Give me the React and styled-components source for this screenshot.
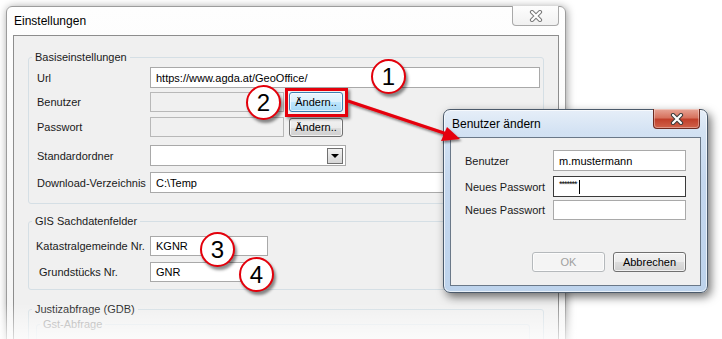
import styled, { createGlobalStyle } from "styled-components";

const GlobalStyle = createGlobalStyle`
  html, body {
    margin: 0;
    background: #fff;
  }
  body {
    font-family: "Liberation Sans", Arial, sans-serif;
    font-size: 11px;
    color: #000;
  }
`;

const Desktop = styled.div`
  position: relative;
  width: 722px;
  height: 339px;
  overflow: hidden;
  background: #fff;
`;

const WindowBase = styled.div`
  position: absolute;
  box-sizing: border-box;
  display: flex;
  flex-direction: column;
`;

const BasicWindow = styled(WindowBase)`
  left: 6px;
  top: 6px;
  width: 560px;
  height: 360px;
  border: 1px solid #9c9c9c;
  border-radius: 6px 6px 0 0;
  background: linear-gradient(#fefefe, #f4f4f4);
  box-shadow: 1px 1px 8px rgba(0, 0, 0, 0.4);
`;

const AeroWindow = styled(WindowBase)`
  left: 443px;
  top: 109px;
  width: 265px;
  height: 184px;
  border: 1px solid #4b5a6b;
  border-radius: 7px;
  background: linear-gradient(
    180deg,
    #e6eef8 0%,
    #d3e2f3 12%,
    #c4d7ee 40%,
    #bdd3ec 100%
  );
  box-shadow: inset 0 0 0 1px rgba(255, 255, 255, 0.65),
    3px 4px 10px rgba(0, 0, 0, 0.55);
`;

const TitleBar = styled.div`
  display: flex;
  align-items: flex-start;
  justify-content: space-between;
  height: ${(p) => p.$height}px;
  flex-shrink: 0;
`;

const Title = styled.span`
  align-self: center;
  padding-left: ${(p) => p.$indent}px;
  font-size: 12px;
  color: #000;
`;

const CloseButton = styled.div`
  display: flex;
  align-items: center;
  justify-content: center;
  width: 47px;
  height: 20px;
  margin-top: -1px;
  margin-right: ${(p) => p.$right}px;
  box-sizing: border-box;
  border-radius: 0 0 4px 4px;
  border: 1px solid ${(p) => (p.$danger ? "#6d2a20" : "#a9a9a9")};
  border-top: none;
  background: ${(p) =>
    p.$danger
      ? "linear-gradient(#e7a596 0%, #d7735f 45%, #c1402b 55%, #d0624a 100%)"
      : "linear-gradient(#fdfdfd, #f1f1f1)"};
  box-shadow: ${(p) =>
    p.$danger ? "inset 0 0 0 1px rgba(255,255,255,0.35)" : "none"};
`;

const Client = styled.div`
  flex: 1;
  margin: 0 ${(p) => p.$side}px ${(p) => p.$bottom}px;
  border: 1px solid ${(p) => p.$edge};
  background: #f0f0f0;
  padding: ${(p) => p.$pad};
  display: flex;
  flex-direction: column;
`;

const Group = styled.fieldset`
  margin: ${(p) => p.$top || 0}px 0 0;
  padding: ${(p) => p.$pad};
  border: 1px solid ${(p) => (p.$faint ? "#e2e8ec" : "#d5dfe5")};
  border-radius: 3px;
  min-width: 0;
`;

const Legend = styled.legend`
  margin-left: ${(p) => p.$shift}px;
  padding: 0 3px;
  font-size: 11px;
  line-height: 13px;
  color: ${(p) => (p.$disabled ? "#a3a3a3" : "#1a1a1a")};
`;

const Row = styled.div`
  display: flex;
  align-items: center;
  height: ${(p) => p.$h}px;
  margin-top: ${(p) => p.$mt || 0}px;
`;

const Label = styled.span`
  width: ${(p) => p.$w}px;
  flex-shrink: 0;
  white-space: nowrap;
  color: #1a1a1a;
`;

const TextBox = styled.div`
  box-sizing: border-box;
  height: 100%;
  width: ${(p) => (p.$w ? `${p.$w}px` : "auto")};
  flex: ${(p) => (p.$w ? "none" : "1")};
  border: 1px solid ${(p) =>
    p.$focus ? "#3a3a3a" : p.$disabled ? "#b8b8b8" : "#a9a9a9"};
  background: ${(p) => (p.$disabled ? "#f0f0f0" : "#fff")};
  padding-left: 5px;
  display: flex;
  align-items: center;
  white-space: nowrap;
  overflow: hidden;
  color: #000;
`;

const Mask = styled.span`
  font-size: 9px;
  letter-spacing: -1px;
  align-self: flex-start;
  margin-top: 2px;
`;

const Caret = styled.span`
  width: 1px;
  height: 14px;
  margin-left: 2px;
  background: #000;
`;

const ComboBox = styled(TextBox)`
  justify-content: flex-end;
  padding: 0 2px 0 5px;
`;

const DropButton = styled.div`
  width: 16px;
  height: 16px;
  box-sizing: border-box;
  border: 1px solid #707070;
  background: linear-gradient(#f2f2f2, #d6d6d6);
  display: flex;
  align-items: center;
  justify-content: center;
`;

const Triangle = styled.div`
  width: 0;
  height: 0;
  border-left: 4px solid transparent;
  border-right: 4px solid transparent;
  border-top: 4px solid #000;
`;

const Button = styled.div`
  box-sizing: border-box;
  width: ${(p) => p.$w}px;
  height: ${(p) => p.$h || 20}px;
  margin-left: ${(p) => p.$ml || 0}px;
  border-radius: 3px;
  display: flex;
  align-items: center;
  justify-content: center;
  font-size: 11px;
  border: 1px solid
    ${(p) => (p.$disabled ? "#b5b9bc" : p.$hot ? "#3c7fb1" : "#707070")};
  color: ${(p) => (p.$disabled ? "#a0a0a0" : "#000")};
  background: ${(p) =>
    p.$disabled
      ? "#f4f4f4"
      : p.$hot
      ? "linear-gradient(#eaf6fd 0%, #d9f0fc 50%, #bee6fd 51%, #a7d9f5 100%)"
      : "linear-gradient(#f2f2f2 0%, #ebebeb 50%, #dddddd 51%, #cfcfcf 100%)"};
  box-shadow: inset 0 0 0 1px rgba(255, 255, 255, 0.7);
`;

const ButtonRow = styled.div`
  display: flex;
  justify-content: flex-end;
  margin-top: ${(p) => p.$mt}px;
`;

const Highlight = styled.div`
  position: absolute;
  left: 285px;
  top: 88px;
  width: 63px;
  height: 29px;
  box-sizing: border-box;
  border: 3px solid #e5000b;
  box-shadow: 2px 2px 3px rgba(0, 0, 0, 0.45);
`;

const Callout = styled.div`
  position: absolute;
  left: ${(p) => p.$x}px;
  top: ${(p) => p.$y}px;
  width: 35px;
  height: 35px;
  box-sizing: border-box;
  border-radius: 50%;
  border: 2.5px solid #e3000b;
  background: #fff;
  box-shadow: 2px 3px 3px rgba(0, 0, 0, 0.45);
  display: flex;
  align-items: center;
  justify-content: center;
  font-family: "Liberation Sans", Arial, sans-serif;
  font-size: 24px;
  color: #000;
`;

const Overlay = styled.svg`
  position: absolute;
  left: 0;
  top: 0;
  pointer-events: none;
`;

const Fade = styled.div`
  position: absolute;
  left: 0;
  right: 0;
  bottom: 0;
  height: 36px;
  pointer-events: none;
  background: linear-gradient(
    rgba(255, 255, 255, 0),
    rgba(255, 255, 255, 0.7)
  );
`;

const CrossGlyph = ({ light }) => (
  <svg width="14" height="12" viewBox="0 0 14 12">
    <path
      d="M3 2 L11 10 M11 2 L3 10"
      stroke={light ? "#3b3b3b" : "#7a7a7a"}
      strokeWidth="4.2"
      strokeLinecap="round"
    />
    <path
      d="M3 2 L11 10 M11 2 L3 10"
      stroke="#fff"
      strokeWidth="2.2"
      strokeLinecap="round"
    />
  </svg>
);

const MainWindow = () => (
  <BasicWindow>
    <TitleBar $height={28}>
      <Title $indent={7}>Einstellungen</Title>
      <CloseButton $right={6}>
        <CrossGlyph />
      </CloseButton>
    </TitleBar>
    <Client $side={6} $bottom={0} $edge="#8d8d8d" $pad="15px 14px 0 14px">
      <Group $pad="3px 3px 10px 8px">
        <Legend $shift={-5}>Basiseinstellungen</Legend>
        <Row $h={21}>
          <Label $w={113}>Url</Label>
          <TextBox>https://www.agda.at/GeoOffice/</TextBox>
        </Row>
        <Row $h={20} $mt={4}>
          <Label $w={113}>Benutzer</Label>
          <TextBox $w={134} $disabled />
          <Button $w={54} $ml={5} $hot>
            Ändern..
          </Button>
        </Row>
        <Row $h={20} $mt={5}>
          <Label $w={113}>Passwort</Label>
          <TextBox $w={134} $disabled />
          <Button $w={54} $ml={5} $h={19}>
            Ändern..
          </Button>
        </Row>
        <Row $h={21} $mt={8}>
          <Label $w={113}>Standardordner</Label>
          <ComboBox $w={196}>
            <DropButton>
              <Triangle />
            </DropButton>
          </ComboBox>
        </Row>
        <Row $h={21} $mt={6}>
          <Label $w={113}>Download-Verzeichnis</Label>
          <TextBox>C:\Temp</TextBox>
        </Row>
      </Group>

      <Group $top={11} $pad="8px 3px 7px 7px">
        <Legend $shift={-4}>GIS Sachdatenfelder</Legend>
        <Row $h={20}>
          <Label $w={114}>Katastralgemeinde Nr.</Label>
          <TextBox $w={118}>KGNR</TextBox>
        </Row>
        <Row $h={20} $mt={6}>
          <Label $w={114}>&nbsp;Grundstücks Nr.</Label>
          <TextBox $w={118}>GNR</TextBox>
        </Row>
      </Group>

      <Group $top={13} $pad="2px 13px 20px 7px">
        <Legend $shift={-4}>Justizabfrage (GDB)</Legend>
        <Group $faint $pad="0 0 20px 0">
          <Legend $shift={3} $disabled>
            Gst-Abfrage
          </Legend>
        </Group>
      </Group>
    </Client>
  </BasicWindow>
);

const UserDialog = () => (
  <AeroWindow>
    <TitleBar $height={27}>
      <Title $indent={8}>Benutzer ändern</Title>
      <CloseButton $right={7} $danger>
        <CrossGlyph light />
      </CloseButton>
    </TitleBar>
    <Client $side={6} $bottom={6} $edge="#6a7888" $pad="12px 14px 0 14px">
      <Row $h={21}>
        <Label $w={88}>Benutzer</Label>
        <TextBox $w={133}>m.mustermann</TextBox>
      </Row>
      <Row $h={21} $mt={5}>
        <Label $w={88}>Neues Passwort</Label>
        <TextBox $w={133} $focus>
          <Mask>*******</Mask>
          <Caret />
        </TextBox>
      </Row>
      <Row $h={20} $mt={3}>
        <Label $w={88}>Neues Passwort</Label>
        <TextBox $w={133} />
      </Row>
      <ButtonRow $mt={32}>
        <Button $w={73} $disabled>
          OK
        </Button>
        <Button $w={73} $ml={8}>
          Abbrechen
        </Button>
      </ButtonRow>
    </Client>
  </AeroWindow>
);

const Arrow = () => (
  <Overlay width="722" height="339" viewBox="0 0 722 339">
    <defs>
      <filter id="shade" x="-20%" y="-20%" width="140%" height="160%">
        <feDropShadow dx="1.5" dy="2" stdDeviation="1.2" floodOpacity="0.45" />
      </filter>
    </defs>
    <g filter="url(#shade)">
      <line
        x1="348"
        y1="101"
        x2="447"
        y2="134"
        stroke="#e5000b"
        strokeWidth="3"
      />
      <polygon points="460,139 441,141 447,127" fill="#e5000b" />
    </g>
  </Overlay>
);

export default function App() {
  return (
    <>
      <GlobalStyle />
      <Desktop>
        <MainWindow />
        <Highlight />
        <Callout $x={371} $y={59}>
          1
        </Callout>
        <Callout $x={246} $y={85}>
          2
        </Callout>
        <Callout $x={200} $y={232}>
          3
        </Callout>
        <Callout $x={239} $y={257}>
          4
        </Callout>
        <Fade />
        <UserDialog />
        <Arrow />
      </Desktop>
    </>
  );
}
